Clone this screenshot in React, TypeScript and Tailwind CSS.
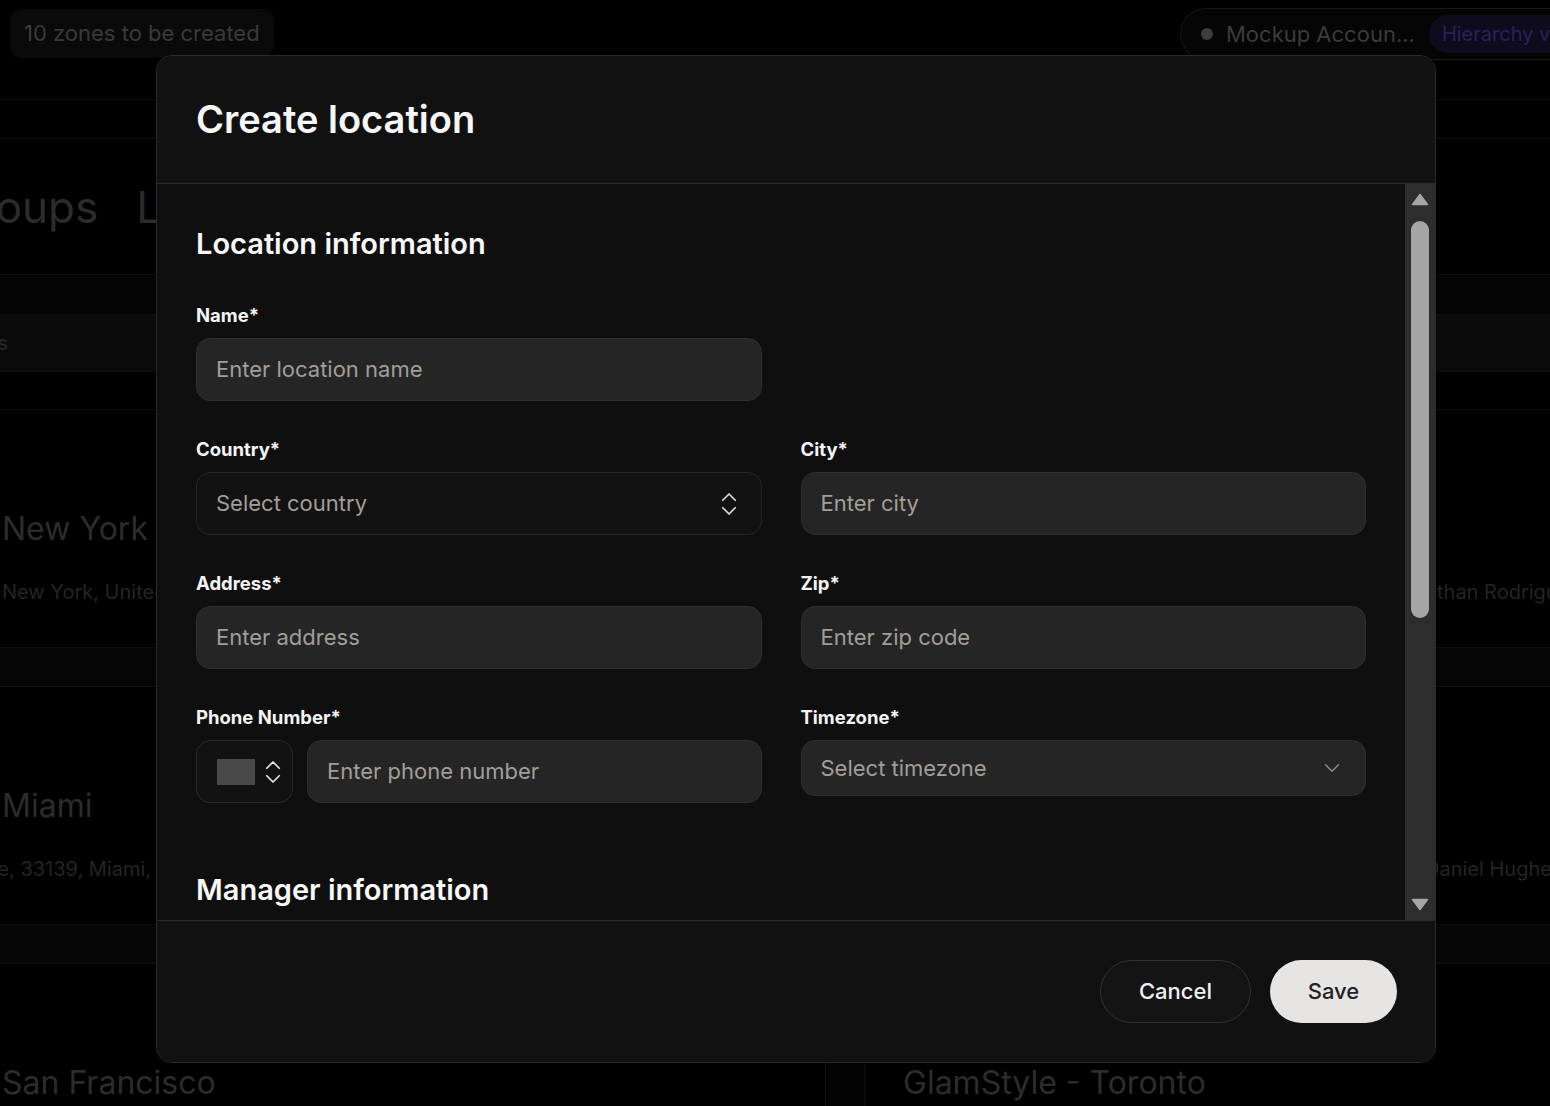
import { ChevronDown, ChevronsUpDown } from 'lucide-react';

const FONT = "font-['Inter','Liberation_Sans',sans-serif]";

function Label({ text }: { text: string }) {
  return <div className="h-[24px] text-[18.5px] leading-[24px] font-bold text-[#f4f4f4] mb-[11px]">{text}</div>;
}

function TextField({ label, placeholder }: { label: string; placeholder: string }) {
  return (
    <div>
      <Label text={label} />
      <div className="h-[63px] rounded-[14px] border border-[#2e2e2e] bg-[#252525] px-[19px] flex items-center text-[22px] text-[#a29e99]">
        {placeholder}
      </div>
    </div>
  );
}

function CardRow({ title, sub, subShift, manager, right }: { title: string; sub: string; subShift?: boolean; manager?: string; right?: string }) {
  return (
    <div className="h-[237px] flex -ml-[36px]">
      <div className="w-[861px] shrink-0 pl-[38px] pt-[99px] overflow-hidden">
        <div className="h-[40px] leading-[40px] text-[32px] text-[#2c2c2c] whitespace-nowrap">{title}</div>
        <div className={`mt-[29px] h-[28px] leading-[28px] text-[20px] text-[#242424] whitespace-nowrap ${subShift ? '-ml-[184px]' : ''}`}>{sub}</div>
      </div>
      <div className="w-[40px] shrink-0 bg-[#030303] border-x border-[#0e0e0e]" />
      <div className="flex-1 pl-[38px] pt-[99px] whitespace-nowrap">
        <div className="h-[40px] leading-[40px] text-[32px] text-[#2c2c2c]">{right ?? ''}</div>
        <div className="mt-[29px] h-[28px] leading-[28px] text-[20px] text-[#242424] pl-[522px]">{manager ?? ''}</div>
      </div>
    </div>
  );
}

function Strip() {
  return <div className="h-[40px] bg-[#050505] border-y border-[#0e0e0e]" />;
}

export default function App() {
  return (
    <div className={`relative w-[1550px] h-[1106px] overflow-hidden bg-black ${FONT}`}>
      {/* background page, dimmed */}
      <div className="h-[100px] border-b border-[#0e0e0e] flex items-start justify-between pl-[10px] pt-[9px]">
        <div className="h-[49px] rounded-[12px] bg-[#0a0a0a] px-[14px] flex items-center text-[22px] text-[#3a3a3a]">
          10 zones to be created
        </div>
        <div className="h-[52px] -mt-[1px] rounded-l-full border border-r-0 border-[#181818] bg-[#050505] pl-[20px] flex items-center w-[370px] shrink-0 overflow-hidden">
          <span className="w-[12px] h-[12px] shrink-0 rounded-full bg-[#3d3d3d]" />
          <span className="ml-[13px] shrink-0 text-[22px] text-[#3b3b3b] whitespace-nowrap">Mockup Accoun...</span>
          <span className="ml-[14px] shrink-0 h-[38px] rounded-full bg-[#0d0b1c] px-[13px] flex items-center text-[20px] text-[#27235a] whitespace-nowrap">
            Hierarchy view
          </span>
        </div>
      </div>
      <div className="h-[39px] border-b border-[#0e0e0e]" />
      <div className="h-[136px] border-b border-[#0e0e0e] flex items-center gap-[38px] -ml-[53px] text-[44px] text-[#2c2c2c]">
        <span>Groups</span>
        <span>Locations</span>
      </div>
      <div className="h-[40px] bg-[#040404] border-b border-[#0e0e0e]" />
      <div className="h-[57px] bg-[#0a0a0a] border-b border-[#0e0e0e] flex items-center -ml-[84px] text-[20px] text-[#2a2a2a]">
        Locations
      </div>
      <div className="h-[38px] border-b border-[#0e0e0e]" />
      <CardRow title="New York" sub="New York, United States" manager="Ethan Rodriguez" />
      <Strip />
      <CardRow title="Miami" sub="1000 Collins Avenue, 33139, Miami, United States" subShift manager="Daniel Hughes" />
      <Strip />
      <CardRow title="San Francisco" sub="Market Street, San Francisco" right="GlamStyle - Toronto" />

      {/* modal */}
      <div className="absolute left-[156px] top-[55px] w-[1280px] h-[1008px] rounded-[16px] border border-[#2a2a2a] bg-[#0f0f0f] flex flex-col overflow-hidden">
        <div className="h-[128px] shrink-0 bg-[#111111] border-b border-[#2a2a2a] pl-[39px] flex items-center">
          <h1 className="text-[38px] font-semibold text-[#f7f7f7]">Create location</h1>
        </div>

        <div className="flex-1 flex min-h-0">
          <div className="flex-1 overflow-hidden pl-[39px] pr-[39px] pt-[42px]">
            <h2 className="h-[36px] leading-[36px] text-[29px] font-semibold text-[#f7f7f7]">Location information</h2>
            <div className="mt-[41px] grid grid-cols-2 gap-x-[39px] gap-y-[36px]">
              <TextField label="Name*" placeholder="Enter location name" />
              <div />
              <div>
                <Label text="Country*" />
                <div className="h-[63px] rounded-[14px] border border-[#262626] bg-[#121212] pl-[19px] pr-[17px] flex items-center justify-between text-[22px] text-[#a29e99]">
                  <span>Select country</span>
                  <ChevronsUpDown size={30} strokeWidth={1.4} className="text-[#d8d8d8]" />
                </div>
              </div>
              <TextField label="City*" placeholder="Enter city" />
              <TextField label="Address*" placeholder="Enter address" />
              <TextField label="Zip*" placeholder="Enter zip code" />
              <div>
                <Label text="Phone Number*" />
                <div className="flex gap-[14px]">
                  <div className="w-[97px] h-[63px] shrink-0 rounded-[14px] border border-[#2a2a2a] bg-[#121212] pl-[20px] flex items-center gap-[3px]">
                    <span className="w-[38px] h-[26px] shrink-0 bg-[#484848]" />
                    <ChevronsUpDown size={30} strokeWidth={1.4} className="text-[#e2e2e2]" />
                  </div>
                  <div className="flex-1 h-[63px] rounded-[14px] border border-[#2e2e2e] bg-[#252525] px-[19px] flex items-center text-[22px] text-[#a29e99]">
                    Enter phone number
                  </div>
                </div>
              </div>
              <div>
                <Label text="Timezone*" />
                <div className="h-[56px] rounded-[14px] border border-[#2e2e2e] bg-[#252525] pl-[19px] pr-[20px] flex items-center justify-between text-[22px] text-[#a29e99]">
                  <span>Select timezone</span>
                  <ChevronDown size={26} strokeWidth={1.3} className="text-[#8c8c8c]" />
                </div>
              </div>
            </div>
            <h2 className="mt-[69px] h-[36px] leading-[36px] text-[29px] font-semibold text-[#f7f7f7]">Manager information</h2>
          </div>

          {/* scrollbar */}
          <div className="w-[30px] shrink-0 bg-[#2d2d2d] flex flex-col items-center pt-[9px] pb-[9px]">
            <svg width="18" height="13" viewBox="0 0 18 13">
              <path d="M9 1.5 L16.5 11.5 H1.5 Z" fill="#a6a6a6" stroke="#a6a6a6" strokeWidth="1.5" strokeLinejoin="round" />
            </svg>
            <div className="mt-[15px] w-[18px] h-[397px] rounded-full bg-[#a6a6a6]" />
            <div className="flex-1" />
            <svg width="18" height="13" viewBox="0 0 18 13">
              <path d="M9 11.5 L16.5 1.5 H1.5 Z" fill="#a6a6a6" stroke="#a6a6a6" strokeWidth="1.5" strokeLinejoin="round" />
            </svg>
          </div>
        </div>

        <div className="h-[142px] shrink-0 border-t border-[#2a2a2a] bg-[#111111] flex items-center justify-end gap-[19px] pr-[38px]">
          <button className="h-[63px] w-[151px] rounded-full border border-[#333333] bg-[#141414] text-[22px] font-medium text-[#f0f0f0]">
            Cancel
          </button>
          <button className="h-[63px] w-[127px] rounded-full bg-[#e6e5e3] text-[22px] font-medium text-[#222222]">
            Save
          </button>
        </div>
      </div>
    </div>
  );
}
